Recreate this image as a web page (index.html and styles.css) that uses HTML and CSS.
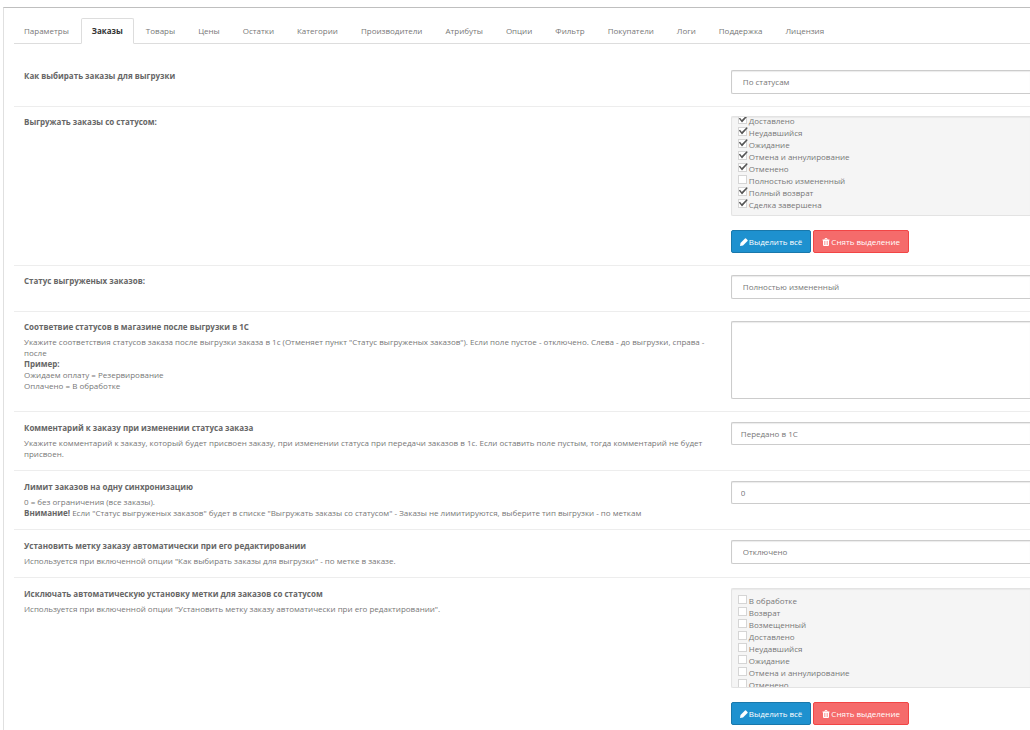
FILE: index.html
```
<!DOCTYPE html>
<html lang="ru">
<head>
    <meta charset="UTF-8">
    <meta name="viewport" content="width=device-width, initial-scale=1.0">
    <title>Заказы</title>
    <link rel="stylesheet" href="styles.css">
</head>
<body>
    <div class="panel">
        <!-- Tabs -->
        <nav class="tabs">
            <a href="#">Параметры</a>
            <a href="#" class="active">Заказы</a>
            <a href="#">Товары</a>
            <a href="#">Цены</a>
            <a href="#">Остатки</a>
            <a href="#">Категории</a>
            <a href="#">Производители</a>
            <a href="#">Атрибуты</a>
            <a href="#">Опции</a>
            <a href="#">Фильтр</a>
            <a href="#">Покупатели</a>
            <a href="#">Логи</a>
            <a href="#">Поддержка</a>
            <a href="#">Лицензия</a>
        </nav>

        <!-- Orders settings -->
        <form class="settings">
            <div class="row compact">
                <div class="info">
                    <label class="title" for="orderSelect">Как выбирать заказы для выгрузки</label>
                </div>
                <div class="field">
                    <select id="orderSelect" class="control"><option>По статусам</option></select>
                </div>
            </div>

            <div class="row compact">
                <div class="info">
                    <span class="title" id="exportLabel">Выгружать заказы со статусом:</span>
                </div>
                <div class="field">
                    <div class="status-list" id="exportStatuses" role="group" aria-labelledby="exportLabel">
                        <label><input type="checkbox" checked>Доставлено</label>
                        <label><input type="checkbox" checked>Неудавшийся</label>
                        <label><input type="checkbox" checked>Ожидание</label>
                        <label><input type="checkbox" checked>Отмена и аннулирование</label>
                        <label><input type="checkbox" checked>Отменено</label>
                        <label><input type="checkbox">Полностью измененный</label>
                        <label><input type="checkbox" checked>Полный возврат</label>
                        <label><input type="checkbox" checked>Сделка завершена</label>
                    </div>
                    <div class="button-group">
                        <button type="button" class="btn btn-primary" onclick="checkAll('exportStatuses', true)">
                            <svg class="icon" viewBox="0 0 16 16"><path d="M0 16l1-6 8-8 5 5-8 8zM10 1q1-1 2 0l3 3q1 1 0 2l-1 1-5-5z"/></svg>Выделить всё
                        </button>
                        <button type="button" class="btn btn-danger" onclick="checkAll('exportStatuses', false)">
                            <svg class="icon" viewBox="0 0 16 16"><path fill-rule="evenodd" d="M1 3h4l1-3h4l1 3h4v2h-1v9q0 2-2 2H4q-2 0-2-2V5H1zM6.500 3h3l-.5-1.500H7zM4.500 6v8h1V6zM7.500 6v8h1V6zM10.500 6v8h1V6z"/></svg>Снять выделение
                        </button>
                    </div>
                </div>
            </div>

            <div class="row compact">
                <div class="info">
                    <label class="title" for="exportedStatus">Статус выгруженых заказов:</label>
                </div>
                <div class="field">
                    <select id="exportedStatus" class="control"><option>Полностью измененный</option></select>
                </div>
            </div>

            <div class="row compact">
                <div class="info">
                    <label class="title" for="statusMap">Соответвие статусов в магазине после выгрузки в 1С</label>
                    <p class="help">Укажите соответствия статусов заказа после выгрузки заказа в 1с (Отменяет пункт "Статус выгруженых заказов"). Если поле пустое - отключено. Слева - до выгрузки, справа - после<br><b>Пример:</b><br>Ожидаем оплату = Резервирование<br>Оплачено = В обработке</p>
                </div>
                <div class="field">
                    <textarea id="statusMap" class="control"></textarea>
                </div>
            </div>

            <div class="row">
                <div class="info">
                    <label class="title" for="comment">Комментарий к заказу при изменении статуса заказа</label>
                    <p class="help">Укажите комментарий к заказу, который будет присвоен заказу, при изменении статуса при передачи заказов в 1с. Если оставить поле пустым, тогда комментарий не будет присвоен.</p>
                </div>
                <div class="field">
                    <input type="text" id="comment" class="control" value="Передано в 1С">
                </div>
            </div>

            <div class="row">
                <div class="info">
                    <label class="title" for="limit">Лимит заказов на одну синхронизацию</label>
                    <p class="help">0 = без ограничения (все заказы).<br><b>Внимание!</b> Если "Статус выгруженых заказов" будет в списке "Выгружать заказы со статусом" - Заказы не лимитируются, выберите тип выгрузки - по меткам</p>
                </div>
                <div class="field">
                    <input type="text" id="limit" class="control" value="0">
                </div>
            </div>

            <div class="row">
                <div class="info">
                    <label class="title" for="autoMark">Установить метку заказу автоматически при его редактировании</label>
                    <p class="help">Используется при включенной опции "Как выбирать заказы для выгрузки" - по метке в заказе.</p>
                </div>
                <div class="field">
                    <select id="autoMark" class="control"><option>Отключено</option></select>
                </div>
            </div>

            <div class="row">
                <div class="info">
                    <span class="title" id="excludeLabel">Исключать автоматическую установку метки для заказов со статусом</span>
                    <p class="help">Используется при включенной опции "Установить метку заказу автоматически при его редактировании".</p>
                </div>
                <div class="field">
                    <div class="status-list" id="excludeStatuses" role="group" aria-labelledby="excludeLabel">
                        <label><input type="checkbox">В обработке</label>
                        <label><input type="checkbox">Возврат</label>
                        <label><input type="checkbox">Возмещенный</label>
                        <label><input type="checkbox">Доставлено</label>
                        <label><input type="checkbox">Неудавшийся</label>
                        <label><input type="checkbox">Ожидание</label>
                        <label><input type="checkbox">Отмена и аннулирование</label>
                        <label><input type="checkbox">Отменено</label>
                    </div>
                    <div class="button-group">
                        <button type="button" class="btn btn-primary" onclick="checkAll('excludeStatuses', true)">
                            <svg class="icon" viewBox="0 0 16 16"><path d="M0 16l1-6 8-8 5 5-8 8zM10 1q1-1 2 0l3 3q1 1 0 2l-1 1-5-5z"/></svg>Выделить всё
                        </button>
                        <button type="button" class="btn btn-danger" onclick="checkAll('excludeStatuses', false)">
                            <svg class="icon" viewBox="0 0 16 16"><path fill-rule="evenodd" d="M1 3h4l1-3h4l1 3h4v2h-1v9q0 2-2 2H4q-2 0-2-2V5H1zM6.500 3h3l-.5-1.500H7zM4.500 6v8h1V6zM7.500 6v8h1V6zM10.500 6v8h1V6z"/></svg>Снять выделение
                        </button>
                    </div>
                </div>
            </div>
        </form>
    </div>

    <script>
        // Check or clear every status in the list
        function checkAll(listId, value) {
            document.querySelectorAll('#' + listId + ' input').forEach(box => {
                box.checked = value;
            });
        }

        // Show the end of the export list
        const exportList = document.getElementById('exportStatuses');
        exportList.scrollTop = exportList.scrollHeight;
    </script>
</body>
</html>
```
FILE: styles.css
```
* {
    box-sizing: border-box;
}

body {
    font-family: "Open Sans", sans-serif;
    font-size: 8px;
    line-height: 12px;
    color: #777;
    margin: 0;
    padding: 7px 0 0 3px;
    background-color: #fff;
    overflow: hidden;
}

.panel {
    border-top: 1px solid #bfbfbf;
    border-left: 1px solid #e0e0e0;
    padding: 10px 0 10px 10px;
}

/* Tabs */
.tabs {
    display: flex;
    gap: 1px;
    border-bottom: 1px solid #ddd;
}

.tabs a {
    padding: 6px 10px;
    margin-bottom: -1px;
    border: 1px solid transparent;
    border-radius: 2px 2px 0 0;
    color: #777;
    text-decoration: none;
}

.tabs a:first-child {
    padding-left: 9px;
}

.tabs a.active {
    color: #333;
    font-weight: bold;
    background: #fff;
    border-color: #ddd;
    border-bottom-color: #fff;
}

/* Settings rows */
.settings {
    margin-top: 17px;
}

.row {
    display: grid;
    grid-template-columns: 16fr 7fr;
    gap: 23px;
    padding: 10px 0 11px 10px;
}

.row.compact {
    padding-top: 9px;
    padding-bottom: 12px;
}

.row + .row {
    border-top: 1px solid #ededed;
}

.title {
    display: block;
    color: #666;
    font-weight: bold;
}

.help {
    margin: 3px 0 0;
    line-height: 11px;
}

.help b {
    color: #666;
}

/* Controls */
.control {
    display: block;
    width: 100%;
    height: 23px;
    padding: 0 9px;
    border: 1px solid #ccc;
    border-right: 0;
    border-radius: 2px 0 0 2px;
    background: #fff;
    box-shadow: inset 0 1px 1px rgba(0, 0, 0, 0.08);
    color: #777;
    font: inherit;
    appearance: none;
}

select.control {
    height: 24px;
    padding: 0 11px;
}

textarea.control {
    height: 78px;
    padding: 5px 9px;
    resize: none;
}

.status-list {
    height: 100px;
    padding: 6px 6px 4px;
    border: 1px solid #e3e3e3;
    border-right: 0;
    border-radius: 2px 0 0 2px;
    background: #f5f5f5;
    box-shadow: inset 0 1px 1px rgba(0, 0, 0, 0.05);
    overflow-y: auto;
    scrollbar-width: none;
}

.status-list label {
    display: flex;
    align-items: flex-start;
    gap: 2px;
}

.status-list input {
    position: relative;
    flex: none;
    width: 9px;
    height: 9px;
    margin: 0;
    border: 1px solid #d5d5d5;
    background: #fff;
    appearance: none;
}

/* Tick, drawn over the box and its border */
.status-list input:checked::after {
    content: "";
    position: absolute;
    left: -1px;
    top: -1px;
    width: 10px;
    height: 9px;
    background: #555;
    clip-path: polygon(10% 40%, 22% 30%, 40% 55%, 88% 2%, 100% 12%, 42% 82%);
}

/* Buttons */
.button-group {
    display: flex;
    gap: 2px;
    margin-top: 14px;
}

.btn {
    display: flex;
    align-items: center;
    gap: 1px;
    height: 23px;
    padding: 0 8px;
    border: 1px solid;
    border-radius: 2px;
    color: #fff;
    font: inherit;
    font-weight: 500;
    cursor: pointer;
}

.btn-primary {
    background-color: #1e91cf;
    border-color: #1978ab;
}

.btn-danger {
    background-color: #f56b6b;
    border-color: #f24545;
}

.icon {
    width: 8px;
    height: 8px;
    fill: currentColor;
}
```
